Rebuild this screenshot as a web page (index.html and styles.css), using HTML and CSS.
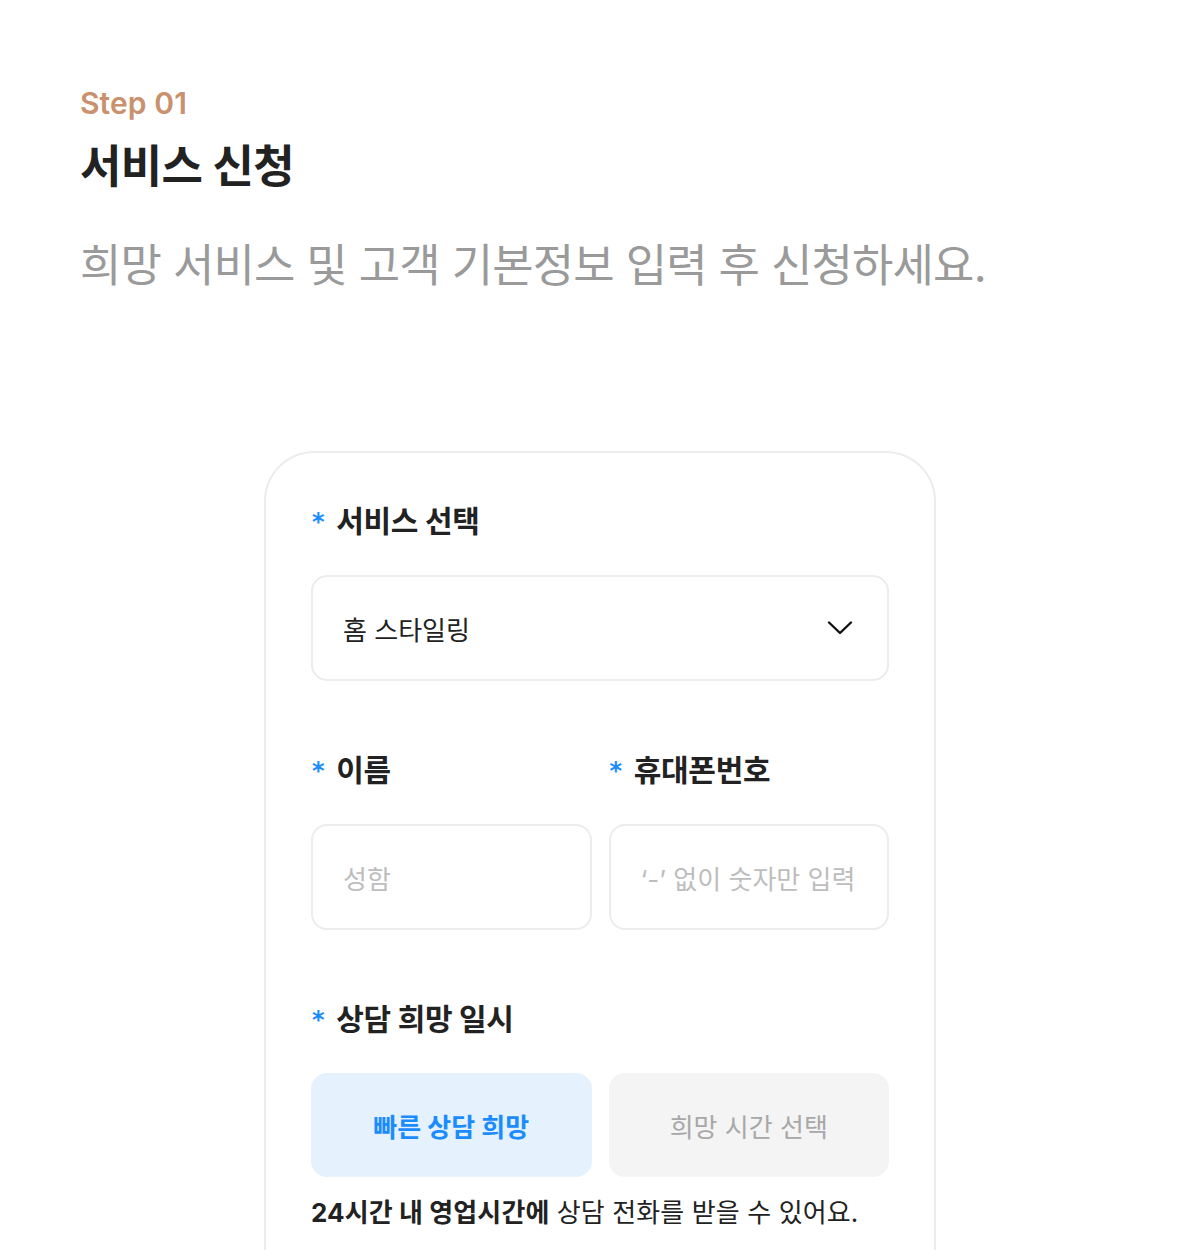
FILE: index.html
```html
<!DOCTYPE html>
<html lang="ko">
<head>
<meta charset="utf-8">
<title>서비스 신청</title>
<link rel="stylesheet" href="styles.css">
</head>
<body>
<div class="page">
  <header class="intro">
    <p class="step">Step 01</p>
    <h1 class="title">서비스 신청</h1>
    <p class="subtitle">희망 서비스 및 고객 기본정보 입력 후 신청하세요.</p>
  </header>

  <section class="card">
    <div class="field">
      <div class="label"><span class="req">*</span>서비스 선택</div>
      <div class="select">
        <span class="select-value">홈 스타일링</span>
        <svg class="chevron" width="26" height="16" viewBox="0 0 26 16" fill="none">
          <path d="M2 2.5 L13 13 L24 2.5" stroke="#111" stroke-width="2.4" stroke-linecap="round" stroke-linejoin="round"/>
        </svg>
      </div>
    </div>

    <div class="row">
      <div class="field">
        <div class="label"><span class="req">*</span>이름</div>
        <div class="input placeholder">성함</div>
      </div>
      <div class="field">
        <div class="label"><span class="req">*</span>휴대폰번호</div>
        <div class="input placeholder">‘-’ 없이 숫자만 입력</div>
      </div>
    </div>

    <div class="field">
      <div class="label"><span class="req">*</span>상담 희망 일시</div>
      <div class="row">
        <div class="choice active">빠른 상담 희망</div>
        <div class="choice">희망 시간 선택</div>
      </div>
      <p class="note"><strong>24시간 내 영업시간에</strong> 상담 전화를 받을 수 있어요.</p>
    </div>
  </section>
</div>
</body>
</html>
```

FILE: styles.css
```css
* { box-sizing: border-box; }
html, body {
  margin: 0;
  padding: 0;
  background: #fff;
}
body {
  font-family: Inter, "Noto Sans CJK KR", sans-serif;
  color: #222;
  width: 1200px;
  height: 1250px;
  overflow: hidden;
}
.page {
  padding: 84px 80px 0;
}
.intro p, .intro h1 { margin: 0; }
.step {
  font-size: 30px;
  line-height: 38px;
  font-weight: 600;
  color: #c9916d;
  letter-spacing: 0.1px;
}
.title {
  margin-top: 16px !important;
  font-size: 45px;
  line-height: 58px;
  font-weight: 700;
  color: #222;
  letter-spacing: -0.6px;
}
.subtitle {
  margin-top: 40px !important;
  font-size: 45px;
  line-height: 60px;
  font-weight: 400;
  color: #9a9a9a;
  letter-spacing: -0.85px;
}
.card {
  width: 672px;
  margin: 155px auto 0;
  border: 2px solid #ececec;
  border-bottom: none;
  border-radius: 50px 50px 0 0;
  padding: 46px 45px 60px;
  display: flex;
  flex-direction: column;
  gap: 67px;
}
.field {
  display: flex;
  flex-direction: column;
}
.row > .field {
  flex: 1;
  min-width: 0;
}
.label {
  display: flex;
  align-items: center;
  height: 40px;
  font-size: 30px;
  font-weight: 700;
  color: #222;
  letter-spacing: -0.3px;
  margin-bottom: 36px;
}
.req {
  color: #1a8cff;
  font-family: "DejaVu Sans", sans-serif;
  font-size: 24px;
  font-weight: 700;
  margin-right: 12px;
  margin-left: 1px;
  position: relative;
  top: 3px;
}
.select, .input {
  height: 106px;
  border: 2px solid #ececec;
  border-radius: 16px;
  display: flex;
  align-items: center;
  padding: 0 30px;
  font-size: 26px;
  letter-spacing: 0;
}
.select {
  justify-content: space-between;
  color: #222;
}
.chevron { margin-right: 4px; }
.placeholder { color: #bdbdbd; }
.row {
  display: flex;
  gap: 17px;
}
.choice {
  flex: 1;
  height: 104px;
  border-radius: 16px;
  background: #f4f4f4;
  color: #a8a8a8;
  display: flex;
  align-items: center;
  justify-content: center;
  font-size: 26px;
  letter-spacing: 0;
}
.choice.active {
  background: #e5f2fe;
  color: #1a8cff;
  font-weight: 700;
}
.note {
  margin: 18px 0 0;
  font-size: 26px;
  line-height: 36px;
  color: #222;
  letter-spacing: 0.1px;
}
.note strong { font-weight: 700; }
```
